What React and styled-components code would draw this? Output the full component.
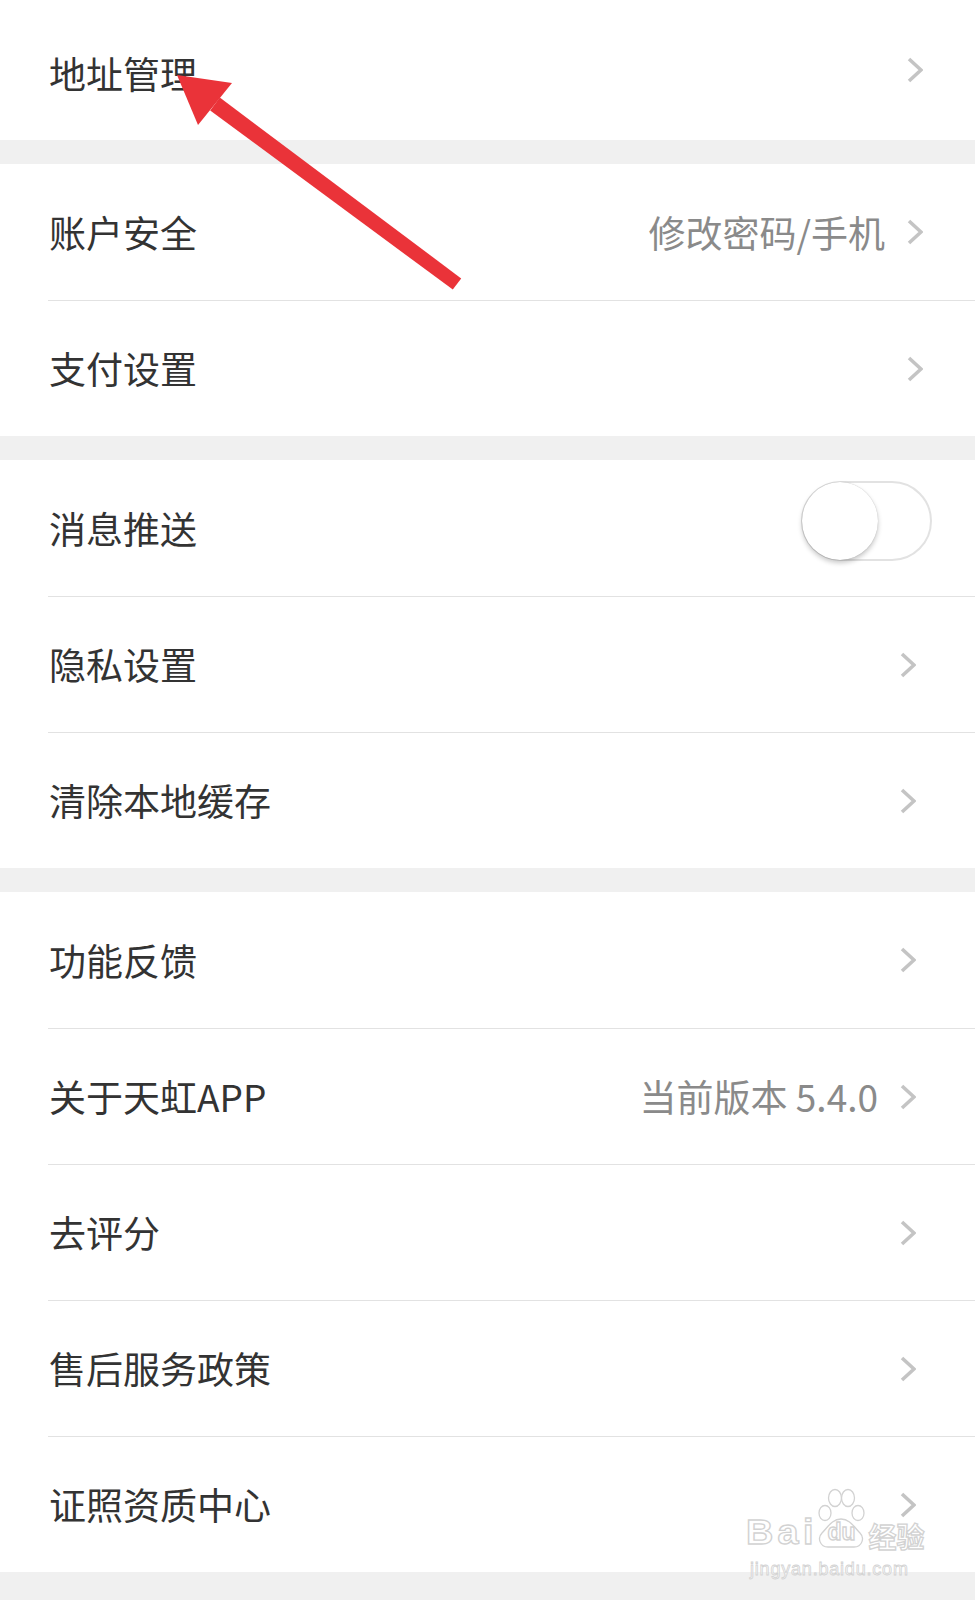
import React from 'react';
import styled, { createGlobalStyle } from 'styled-components';

const GlobalStyle = createGlobalStyle`
	html, body {
		margin: 0;
		padding: 0;
		background: #ffffff;
	}
	body {
		font-family: "Noto Sans CJK SC", "Noto Sans", sans-serif;
		-webkit-font-smoothing: antialiased;
	}
`;

const Page = styled.div`
	position: relative;
	width: 975px;
	height: 1600px;
	overflow: hidden;
	background: #f0f0f0;
`;

const Section = styled.div`
	background: #ffffff;
`;

const SectionGap = styled.div`
	height: 24px;
	background: #f0f0f0;
`;

const Row = styled.div`
	box-sizing: border-box;
	height: ${p => p.tall ? 140 : 136}px;
	margin-left: 48px;
	padding-right: ${p => p.pr}px;
	display: flex;
	align-items: center;
	& + & {
		border-top: 1px solid #e2e2e2;
	}
`;

const Label = styled.span`
	flex: 1;
	font-size: 37px;
	line-height: 1;
	color: #333333;
	padding-left: 1px;
	padding-top: ${p => p.tall ? 6 : 0}px;
`;

const Value = styled.span`
	font-size: 37px;
	line-height: 1;
	color: #8a8a8a;
	margin-right: 22px;
`;

const Chevron = () => (
	<svg width="16" height="26" viewBox="0 0 16 26">
		<polyline points="2,2 14,13 2,24" fill="none" stroke="#c4c4c4" strokeWidth="3.6" strokeLinejoin="miter" />
	</svg>
);

const Switch = styled.div`
	position: relative;
	box-sizing: border-box;
	width: 131px;
	height: 80px;
	border-radius: 40px;
	border: 2px solid #e2e2e2;
	background: #ffffff;
	margin-bottom: 14px;
`;

const Knob = styled.div`
	position: absolute;
	left: -1px;
	top: -1px;
	width: 76px;
	height: 78px;
	border-radius: 50%;
	background: #ffffff;
	box-shadow: 0 3px 5px rgba(0, 0, 0, 0.22), 0 0 1px rgba(0, 0, 0, 0.25);
`;

const Overlay = styled.svg`
	position: absolute;
	left: 0;
	top: 0;
	pointer-events: none;
`;

const Watermark = styled.div`
	position: absolute;
	left: 746px;
	top: 1486px;
	width: 190px;
	pointer-events: none;
	font-family: "Liberation Sans", Arial, "Noto Sans CJK SC", sans-serif;
	color: rgba(255, 255, 255, 0.6);
	-webkit-text-stroke: 1.3px #d2d2d2;
`;

const MarkLine = styled.div`
	display: flex;
	align-items: flex-end;
	height: 62px;
`;

const MarkBai = styled.span`
	font-size: 35px;
	font-weight: 700;
	letter-spacing: 4px;
	line-height: 1;
	margin-bottom: -1px;
	transform: scaleX(1.08);
	transform-origin: left bottom;
	margin-right: 4px;
`;

const MarkPaw = styled.span`
	position: relative;
	width: 50px;
	height: 62px;
	display: flex;
	align-items: flex-end;
	justify-content: center;
`;

const MarkDu = styled.span`
	position: relative;
	font-size: 23px;
	font-weight: 700;
	line-height: 1;
	margin-bottom: 4px;
`;

const MarkCn = styled.span`
	font-family: "Noto Sans CJK SC", sans-serif;
	font-size: 28px;
	font-weight: 700;
	line-height: 1;
	margin-left: 2px;
	margin-bottom: -2px;
`;

const MarkUrl = styled.div`
	font-size: 18px;
	letter-spacing: 0.8px;
	line-height: 1;
	margin-top: 12px;
	margin-left: 4px;
	-webkit-text-stroke: 0.8px #d2d2d2;
`;

const sections = [
	{ pr: 52, tall: true, rows: [{ label: '地址管理' }] },
	{ pr: 52, rows: [{ label: '账户安全', value: '修改密码/手机' }, { label: '支付设置' }] },
	{ pr: 59, rows: [{ label: '消息推送', toggle: true }, { label: '隐私设置' }, { label: '清除本地缓存' }] },
	{
		pr: 59,
		rows: [
			{ label: '功能反馈' },
			{ label: '关于天虹APP', value: '当前版本 5.4.0' },
			{ label: '去评分' },
			{ label: '售后服务政策' },
			{ label: '证照资质中心' }
		]
	}
];

export default function App() {
	return (
		<>
			<GlobalStyle />
			<Page>
				{sections.map((s, i) => (
					<React.Fragment key={i}>
						<Section>
							{s.rows.map(r => (
								<Row key={r.label} pr={r.toggle ? 43 : s.pr} tall={s.tall}>
									<Label tall={s.tall}>{r.label}</Label>
									{r.value && <Value>{r.value}</Value>}
									{r.toggle ? (
										<Switch><Knob /></Switch>
									) : (
										<Chevron />
									)}
								</Row>
							))}
						</Section>
						<SectionGap />
					</React.Fragment>
				))}

				<Overlay width="975" height="1600" viewBox="0 0 975 1600">
					<polygon points="210.2,110.4 219.8,97.6 461.2,278.4 452.8,289.6" fill="#ea3339" />
					<polygon points="177,75 232,83 198,125" fill="#ea3339" />
				</Overlay>

				<Watermark>
					<MarkLine>
						<MarkBai>Bai</MarkBai>
						<MarkPaw>
							<svg width="50" height="62" viewBox="0 0 50 62" style={{ position: 'absolute', left: 0, top: 0 }}>
								<g fill="rgba(255,255,255,0.6)" stroke="#d2d2d2" strokeWidth="1.3">
									<ellipse cx="9" cy="27" rx="6" ry="7.5" />
									<ellipse cx="19" cy="12" rx="6.5" ry="8.5" />
									<ellipse cx="32" cy="12" rx="6.5" ry="8.5" />
									<ellipse cx="42" cy="27" rx="6" ry="7.5" />
									<path d="M25 33 C34 33 38 41 44 47 C49 52 46 61 38 61 L12 61 C4 61 1 52 6 47 C12 41 16 33 25 33 Z" />
								</g>
							</svg>
							<MarkDu>du</MarkDu>
						</MarkPaw>
						<MarkCn>经验</MarkCn>
					</MarkLine>
					<MarkUrl>jingyan.baidu.com</MarkUrl>
				</Watermark>
			</Page>
		</>
	);
}
